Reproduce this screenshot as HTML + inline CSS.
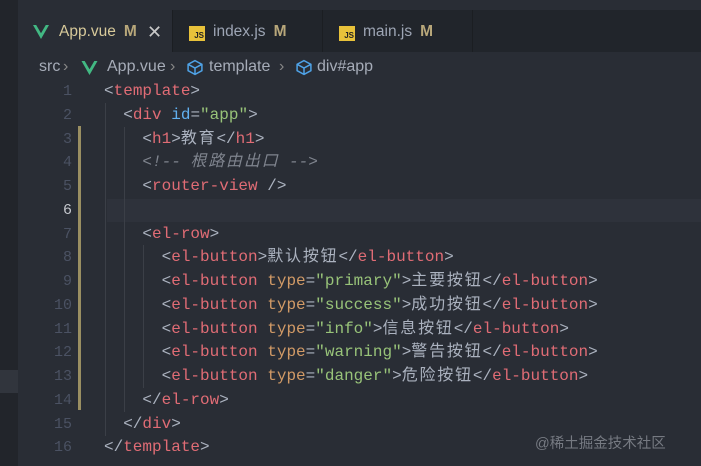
<!DOCTYPE html>
<html><head><meta charset="utf-8"><style>
*{margin:0;padding:0;box-sizing:border-box}
body{width:701px;height:466px;background:#292d35;overflow:hidden;position:relative;font-family:"Liberation Sans","Noto Sans CJK SC",sans-serif}
.strip{position:absolute;left:0;top:0;width:18px;height:466px;background:#22252b}
.tabbar{position:absolute;left:18px;top:10px;right:0;height:42px;background:#21252b}
.tab{position:absolute;top:0;height:42px;font-size:15.5px;line-height:44px;color:#9da5b4;border-right:1px solid #1b1e22}
.tab.act{background:#292d35;color:#d7c99a}
.m{color:#b8a77a;font-weight:bold;margin-left:8px}
.js{display:inline-block;width:16px;height:15px;background:#e8c23a;color:#222;font-size:8px;line-height:19px;text-align:right;padding-right:1px;vertical-align:-2px;font-weight:bold;margin-right:8px}
.bc{position:absolute;top:57px;font-size:16px;line-height:20px;color:#a6acb8;white-space:nowrap}
.ln{position:absolute;left:0;width:72px;text-align:right;font-family:"Liberation Mono",monospace;font-size:15px;color:#4b5263}
.code{position:absolute;left:104px;font-family:"Liberation Mono","Noto Sans CJK SC",monospace;font-size:16px;color:#abb2bf;white-space:pre}
.t{color:#e06c75}.a{color:#d19a66}.s{color:#98c379}.i{color:#61afef}.c{color:#7f848e;font-style:italic}
.z{letter-spacing:1.8px}
.g{position:absolute;width:1px;background:#3b3f47}
</style></head><body>
<div class="strip"></div>
<div style="position:absolute;left:0;top:370px;width:18px;height:23px;background:#31353d"></div>
<div class="tabbar"></div>
<div class="tab act" style="left:18px;width:155px;top:10px"><svg style="position:absolute;left:15px;top:15px" width="16" height="14" viewBox="0 0 16 14"><path d="M0 0h3.2L8 8.3 12.8 0H16L8 14z" fill="#42b883"/></svg><span style="position:absolute;left:41px">App.vue<span class="m">M</span></span><span style="position:absolute;left:129px;color:#c8c8c8;font-size:18px">✕</span></div>
<div class="tab" style="left:173px;width:150px;top:10px;padding-left:16px"><span class="js">JS</span>index.js<span class="m">M</span></div>
<div class="tab" style="left:323px;width:150px;top:10px;padding-left:16px"><span class="js">JS</span>main.js<span class="m">M</span></div>
<div class="bc" style="left:39px">src</div>
<div class="bc" style="left:63px;color:#888">›</div>
<svg style="position:absolute;left:81px;top:61px" width="17" height="14" viewBox="0 0 16 14"><path d="M0 0h3.2L8 8.3 12.8 0H16L8 14z" fill="#42b883"/></svg>
<div class="bc" style="left:107px">App.vue</div>
<div class="bc" style="left:170px;color:#888">›</div>
<svg style="position:absolute;left:186px;top:59px" width="18" height="17" viewBox="0 0 16 16" fill="none" stroke="#4fa3e8" stroke-width="1.4"><path d="M8 1.5L14.5 5v6L8 14.5 1.5 11V5z M1.5 5L8 8.5 14.5 5 M8 8.5v6"/></svg>
<div class="bc" style="left:209px">template</div>
<div class="bc" style="left:279px;color:#888">›</div>
<svg style="position:absolute;left:295px;top:59px" width="18" height="17" viewBox="0 0 16 16" fill="none" stroke="#4fa3e8" stroke-width="1.4"><path d="M8 1.5L14.5 5v6L8 14.5 1.5 11V5z M1.5 5L8 8.5 14.5 5 M8 8.5v6"/></svg>
<div class="bc" style="left:317px">div#app</div>
<div style="position:absolute;left:107px;top:199px;right:0;height:23px;background:#2e323b"></div>
<div style="position:absolute;left:78px;top:126px;width:3px;height:284px;background:#9a8f62"></div>
<div class="g" style="left:105px;top:103px;height:333px"></div>
<div class="g" style="left:124px;top:127px;height:285px"></div>
<div class="g" style="left:143px;top:245px;height:143px"></div>
<div id="L"></div>
<div style="position:absolute;left:535px;top:432px;font-size:14.5px;color:#767a82">@稀土掘金技术社区</div>
<script>
(function(){
var lines=[
'&lt;<span class="t">template</span>&gt;',
'  &lt;<span class="t">div</span> <span class="i">id</span>=<span class="s">"app"</span>&gt;',
'    &lt;<span class="t">h1</span>&gt;<span class="z">教育</span>&lt;/<span class="t">h1</span>&gt;',
'    <span class="c">&lt;!-- <span class="z">根路由出口</span> --&gt;</span>',
'    &lt;<span class="t">router-view</span> /&gt;',
'',
'    &lt;<span class="t">el-row</span>&gt;',
'      &lt;<span class="t">el-button</span>&gt;<span class="z">默认按钮</span>&lt;/<span class="t">el-button</span>&gt;',
'      &lt;<span class="t">el-button</span> <span class="a">type</span>=<span class="s">"primary"</span>&gt;<span class="z">主要按钮</span>&lt;/<span class="t">el-button</span>&gt;',
'      &lt;<span class="t">el-button</span> <span class="a">type</span>=<span class="s">"success"</span>&gt;<span class="z">成功按钮</span>&lt;/<span class="t">el-button</span>&gt;',
'      &lt;<span class="t">el-button</span> <span class="a">type</span>=<span class="s">"info"</span>&gt;<span class="z">信息按钮</span>&lt;/<span class="t">el-button</span>&gt;',
'      &lt;<span class="t">el-button</span> <span class="a">type</span>=<span class="s">"warning"</span>&gt;<span class="z">警告按钮</span>&lt;/<span class="t">el-button</span>&gt;',
'      &lt;<span class="t">el-button</span> <span class="a">type</span>=<span class="s">"danger"</span>&gt;<span class="z">危险按钮</span>&lt;/<span class="t">el-button</span>&gt;',
'    &lt;/<span class="t">el-row</span>&gt;',
'  &lt;/<span class="t">div</span>&gt;',
'&lt;/<span class="t">template</span>&gt;'];
var h='';
for(var i=0;i<16;i++){var y=79+i*23.75;
h+='<div class="ln" style="top:'+(y+2)+'px;line-height:22px'+(i==5?';color:#c5c8ce':'')+'">'+(i+1)+'</div>';
h+='<div class="code" style="top:'+y+'px;line-height:24px">'+lines[i]+'</div>';}
document.getElementById('L').innerHTML=h;
})();
</script>
</body></html>
